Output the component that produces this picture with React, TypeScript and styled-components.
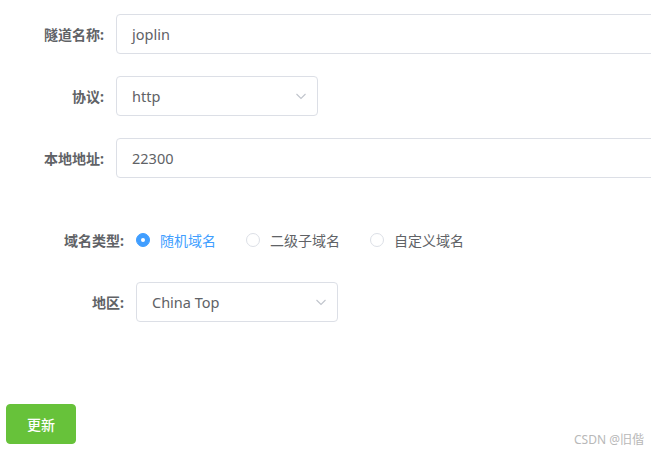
import styled, { createGlobalStyle } from 'styled-components';

const GlobalStyle = createGlobalStyle`
  html, body {
    margin: 0;
    padding: 0;
    background: #ffffff;
    overflow: hidden;
  }
  body {
    font-family: "Noto Sans", "Noto Sans CJK SC", sans-serif;
    font-size: 14px;
    color: #606266;
  }
`;

const regions = ['China Top'];
const domainTypes = ['随机域名', '二级子域名', '自定义域名'];

const Chevron = () => (
  <svg width="12" height="12" viewBox="0 0 12 12" fill="none">
    <path d="M1.5 4l4.5 4.5L10.5 4" stroke="#c0c4cc" strokeWidth="1.1" />
  </svg>
);

const App = () => {
  return (
    <Page>
      <GlobalStyle />
      <Form>
        <Item>
          <Label>隧道名称:</Label>
          <Input wide>joplin</Input>
        </Item>
        <Item>
          <Label>协议:</Label>
          <Select>
            <span>http</span>
            <Chevron />
          </Select>
        </Item>
        <Item>
          <Label>本地地址:</Label>
          <Input wide>22300</Input>
        </Item>
      </Form>

      <Form wideLabel>
        <Item>
          <Label wideLabel>域名类型:</Label>
          <RadioGroup>
            {domainTypes.map((t, i) => (
              <Radio key={t}>
                <RadioDot checked={i === 0} />
                <RadioText checked={i === 0}>{t}</RadioText>
              </Radio>
            ))}
          </RadioGroup>
        </Item>
        <Item>
          <Label wideLabel>地区:</Label>
          <Select>
            <span>{regions[0]}</span>
            <Chevron />
          </Select>
        </Item>
      </Form>

      <Footer>
        <Button>更新</Button>
      </Footer>

      <Watermark>CSDN @旧偕</Watermark>
    </Page>
  );
};

export default App;

const Page = styled.div`
  position: relative;
  width: 651px;
  height: 455px;
  padding-top: 14px;
  box-sizing: border-box;
  overflow: hidden;
`;

const Form = styled.div<{ wideLabel?: boolean }>`
  display: flex;
  flex-direction: column;
  gap: 22px;
  margin-top: ${({ wideLabel }) => (wideLabel ? '42px' : '0')};
`;

const Item = styled.div`
  display: flex;
  align-items: center;
  height: 40px;
`;

const Label = styled.label<{ wideLabel?: boolean }>`
  width: ${({ wideLabel }) => (wideLabel ? '124px' : '104px')};
  padding-right: 12px;
  text-align: right;
  font-weight: 700;
  color: #606266;
  font-size: 14px;
  flex-shrink: 0;
`;

const Input = styled.div<{ wide?: boolean }>`
  box-sizing: border-box;
  width: ${({ wide }) => (wide ? '600px' : '202px')};
  height: 40px;
  flex-shrink: 0;
  display: flex;
  align-items: center;
  padding: 0 15px 1px;
  border: 1px solid #dcdfe6;
  border-radius: 4px;
  font-size: 14.5px;
  color: #606266;
`;

const Select = styled(Input)`
  justify-content: space-between;
  padding-right: 10px;
`;

const RadioGroup = styled.div`
  display: flex;
  align-items: center;
`;

const Radio = styled.div`
  display: flex;
  align-items: center;
  margin-right: 30px;
  cursor: pointer;
`;

const RadioDot = styled.span<{ checked?: boolean }>`
  box-sizing: border-box;
  width: 14px;
  height: 14px;
  border-radius: 50%;
  border: 1px solid ${({ checked }) => (checked ? '#409eff' : '#dcdfe6')};
  background: ${({ checked }) => (checked ? '#409eff' : '#ffffff')};
  display: flex;
  align-items: center;
  justify-content: center;

  &::after {
    content: '';
    width: 4px;
    height: 4px;
    border-radius: 50%;
    background: #ffffff;
    display: ${({ checked }) => (checked ? 'block' : 'none')};
  }
`;

const RadioText = styled.span<{ checked?: boolean }>`
  padding-left: 10px;
  font-size: 14px;
  color: ${({ checked }) => (checked ? '#409eff' : '#606266')};
`;

const Footer = styled.div`
  margin-top: 82px;
  padding-left: 6px;
`;

const Button = styled.button`
  box-sizing: border-box;
  width: 70px;
  height: 40px;
  border: 1px solid #67c23a;
  background: #67c23a;
  color: #ffffff;
  border-radius: 4px;
  font-family: "Noto Sans", "Noto Sans CJK SC", sans-serif;
  font-size: 14px;
  font-weight: 500;
  padding: 0;
`;

const Watermark = styled.div`
  position: absolute;
  right: 7px;
  bottom: 7px;
  font-size: 12px;
  color: #b8b8b8;
`;
